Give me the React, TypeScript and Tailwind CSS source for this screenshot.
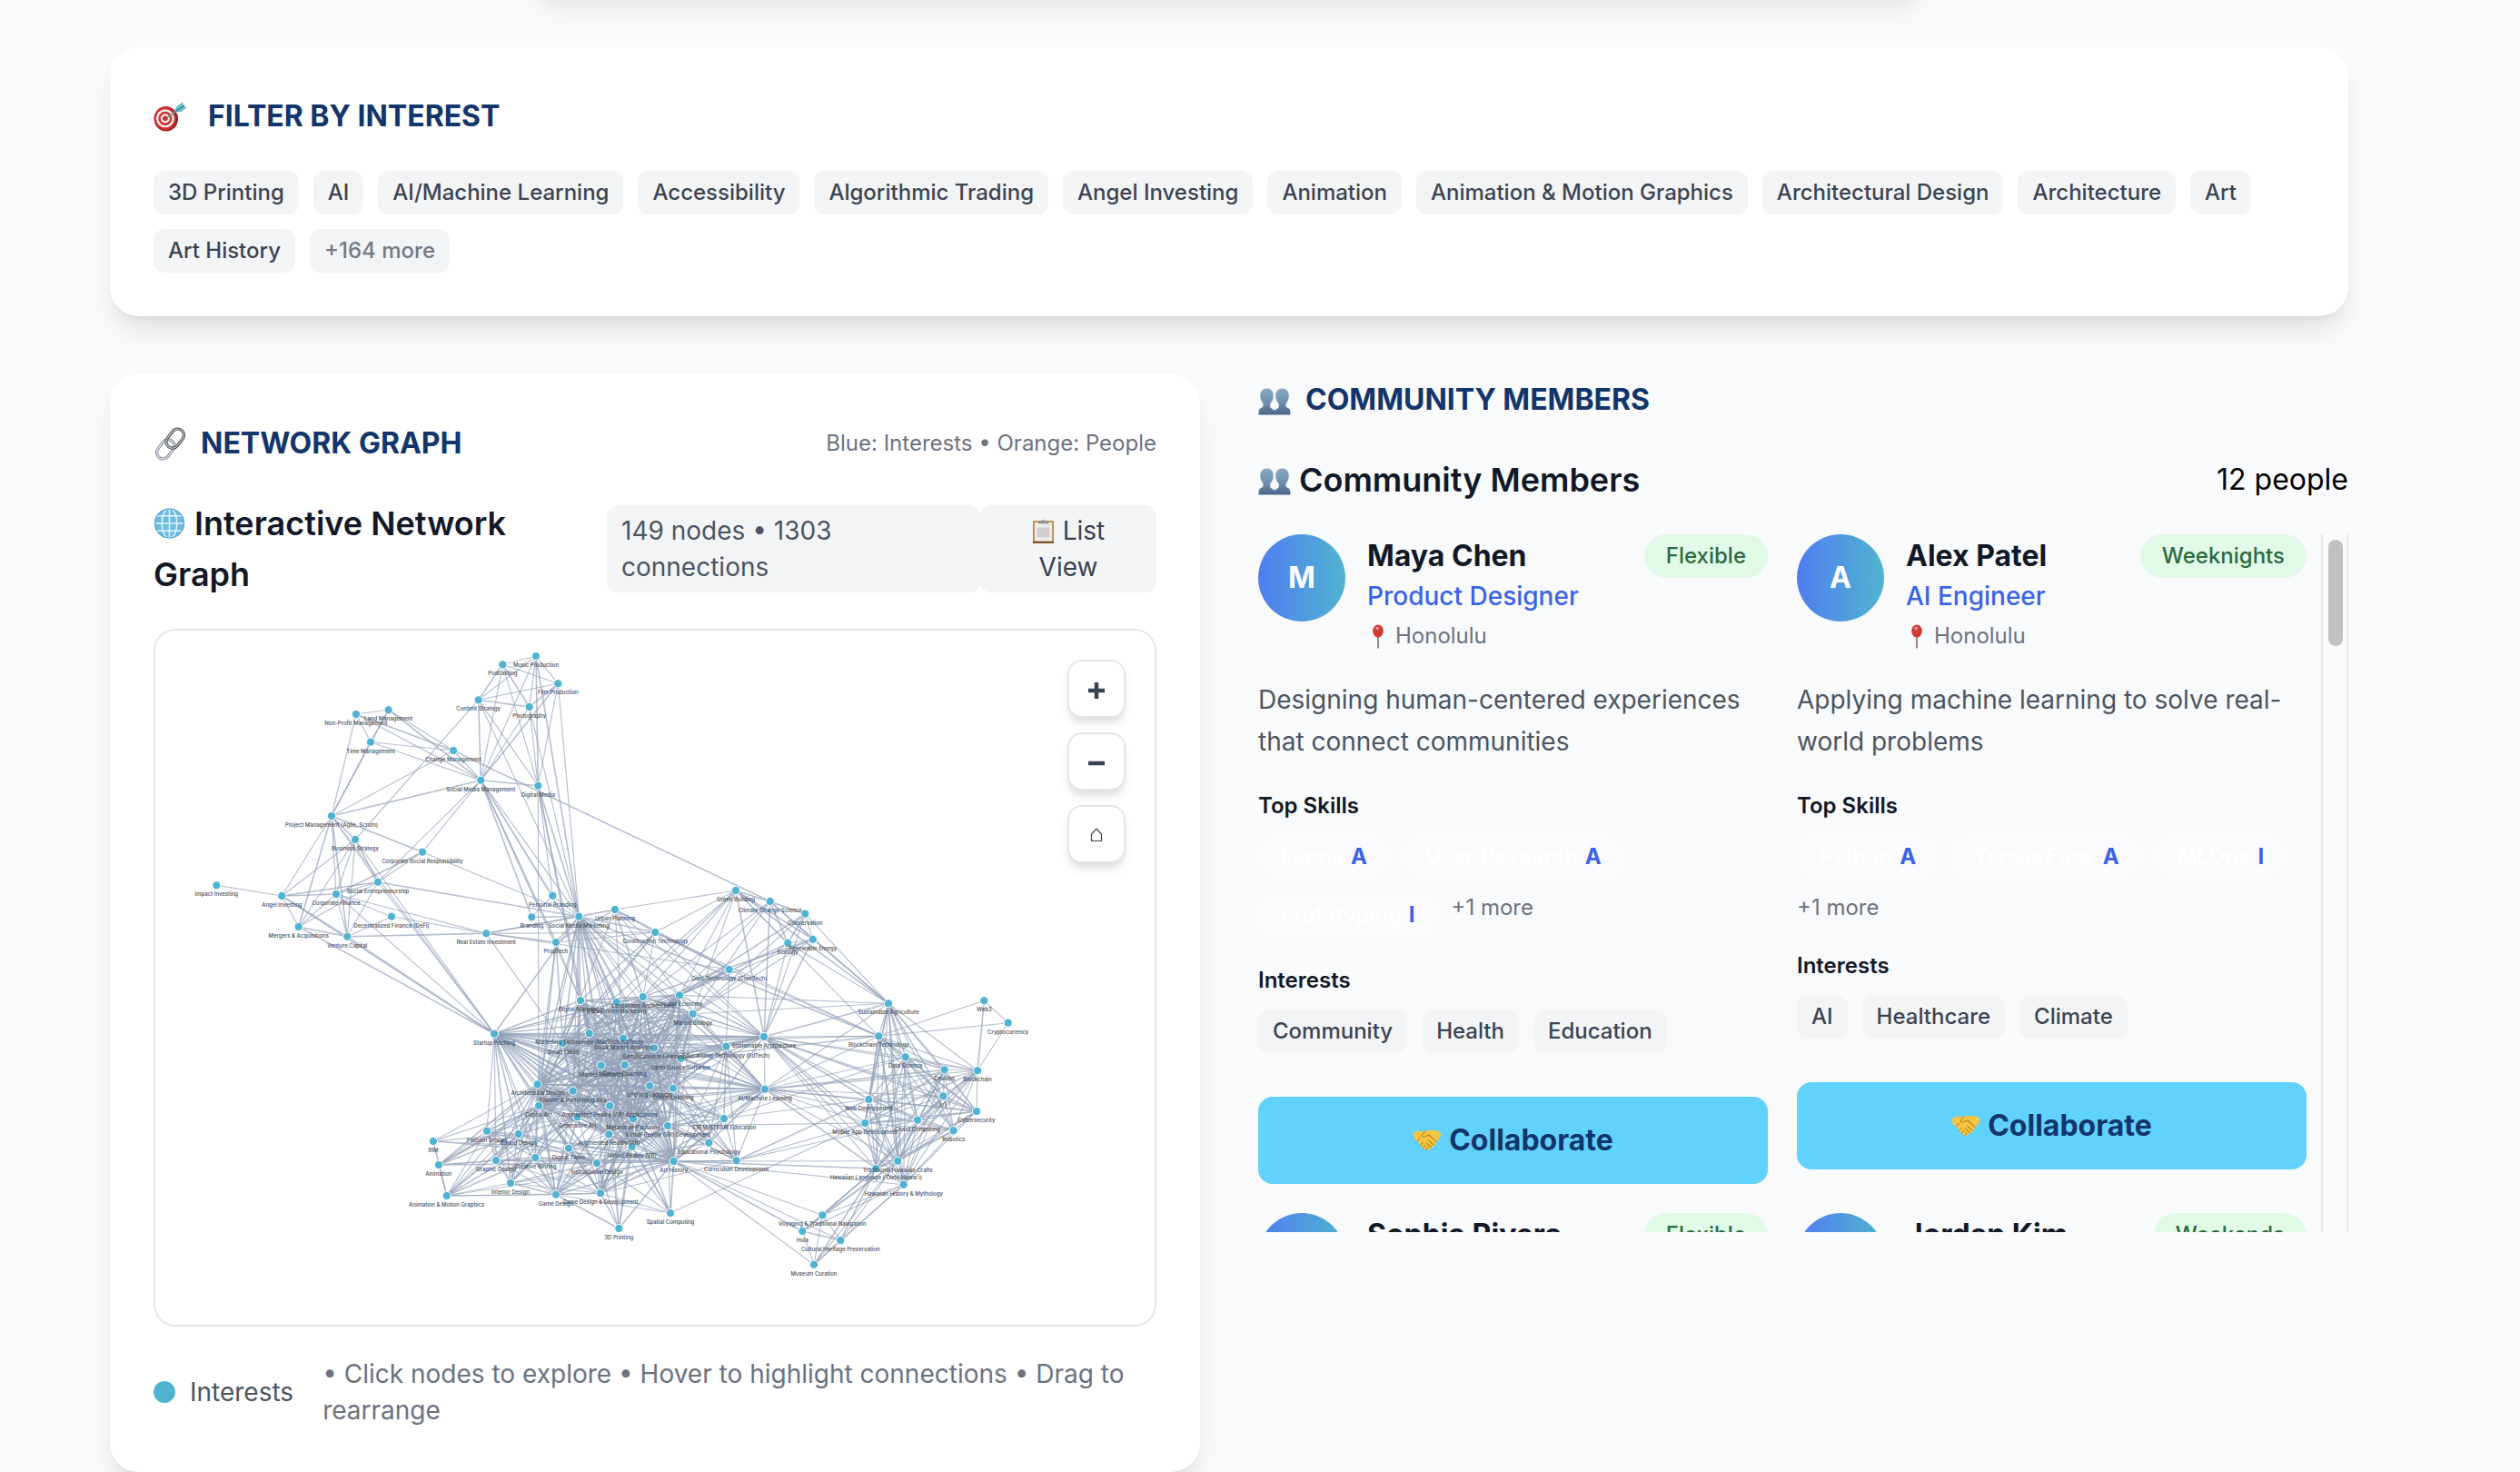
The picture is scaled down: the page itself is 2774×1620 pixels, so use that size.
import React from "react";

/* ---------- Icons ---------- */

function TargetIcon({ className }: { className?: string }) {
  return (
    <svg viewBox="0 0 40 36" className={className}>
      <ellipse cx="14.500" cy="21" rx="14" ry="14.500" fill="#8f1d1c" />
      <ellipse cx="13.500" cy="20.500" rx="13" ry="13.800" fill="#c9302b" />
      <circle cx="13.500" cy="20.500" r="10.600" fill="#f4efee" />
      <circle cx="13.500" cy="20.500" r="8" fill="#c9302b" />
      <circle cx="13.500" cy="20.500" r="5.400" fill="#f4efee" />
      <circle cx="13.500" cy="20.500" r="3" fill="#c9302b" />
      <path d="M15 20 L28 11" stroke="#6f8b93" strokeWidth="1.6" />
      <path d="M24 13 L26 7.500 L34 1 L34.500 6 L39 7.500 L32 13 Z" fill="#6fc0ca" />
      <path d="M25 13 L36 5" stroke="#2f7f90" strokeWidth="1.2" />
    </svg>
  );
}

function LinkIcon({ className }: { className?: string }) {
  return (
    <svg viewBox="0 0 40 40" className={className} fill="none">
      <g transform="rotate(-52 20 20)">
        <rect x="-1" y="12" width="25" height="15" rx="7.500" stroke="#7b828c" strokeWidth="3.400" />
        <rect x="-1" y="12" width="25" height="15" rx="7.500" stroke="#dde3ea" strokeWidth="1.500" />
        <rect x="16" y="13" width="25" height="15" rx="7.500" stroke="#4b4549" strokeWidth="3.400" />
        <rect x="16" y="13" width="25" height="15" rx="7.500" stroke="#c6cdd8" strokeWidth="1.300" />
      </g>
    </svg>
  );
}

function GlobeIcon({ className }: { className?: string }) {
  return (
    <svg viewBox="0 0 36 36" className={className} fill="none">
      <circle cx="18" cy="18" r="17" fill="#6dbbe0" />
      <g stroke="#e2f5fc" strokeWidth="1.600">
        <ellipse cx="18" cy="18" rx="8.500" ry="17" />
        <path d="M18 1v34M1 18h34M4 9.500h28M4 26.500h28" />
      </g>
      <circle cx="18" cy="18" r="16.600" stroke="#4a9bc4" strokeWidth="1" />
    </svg>
  );
}

function ClipboardIcon({ className }: { className?: string }) {
  return (
    <svg viewBox="0 0 26 30" className={className}>
      <rect x="1" y="3" width="24" height="26" rx="1.6" fill="#b98b4e" />
      <rect x="1" y="26.5" width="24" height="2.5" rx="1" fill="#7d5528" />
      <rect x="3" y="5" width="20" height="21.5" fill="#ecebe9" />
      <rect x="6" y="11" width="14" height="11" fill="#cfcecd" />
      <path d="M7 6.5V4h3.5a2.6 2.6 0 0 1 5 0H19v2.500z" fill="#8f969c" />
    </svg>
  );
}

function PeopleIcon({ className }: { className?: string }) {
  return (
    <svg viewBox="0 0 36 30" className={className}>
      <defs>
        <linearGradient id="bust" x1="0" y1="0" x2="0" y2="1">
          <stop offset="0" stopColor="#8aa9c6" />
          <stop offset="0.55" stopColor="#6e8eae" />
          <stop offset="1" stopColor="#48678a" />
        </linearGradient>
      </defs>
      <g fill="url(#bust)">
        <path d="M9.500 0.500c-4.500 0-7.300 3.200-7.300 8 0 4 1.600 6.600 3.300 8.500 .6 3-.4 4.600-2.700 5.300C1 23 .5 25 .5 29.500h18V25l-4.500-3c-1-.8-1.200-3-.6-5 1.800-2 3.400-4.500 3.400-8.500 0-4.800-2.800-8-7.300-8z" />
        <path d="M26.500 .5c4.500 0 7.300 3.200 7.300 8 0 4-1.600 6.600-3.300 8.500-.6 3 .4 4.600 2.700 5.300 1.800.7 2.300 2.700 2.300 7.200h-18V25l4.500-3c1-.8 1.200-3 .6-5-1.800-2-3.400-4.500-3.400-8.500 0-4.800 2.800-8 7.300-8z" />
      </g>
    </svg>
  );
}

function PinIcon({ className }: { className?: string }) {
  return (
    <svg viewBox="0 0 14 27" className={className}>
      <path d="M7 11v15.500" stroke="#8d7d78" strokeWidth="1.800" />
      <ellipse cx="7" cy="7.500" rx="5.800" ry="7" fill="#cf3a31" />
      <circle cx="6.200" cy="4.500" r="2" fill="#ee8b80" />
    </svg>
  );
}

function HandshakeIcon({ className }: { className?: string }) {
  return (
    <svg viewBox="0 0 32 24" className={className}>
      <path
        d="M0.500 4.500 5 1.200 11 2.600 14.500 1.300 20 1 27 1.200 31.500 4.500 29.500 10.500 26 13.500 24.500 17.500 20.500 20.500 16.500 23 12.500 21.500 8.500 17.500 5.500 12.500 2 11z"
        fill="#f5c644"
      />
      <path
        d="M14.500 1.500 10 6.500q1 3 5 .8l3-1.300 8 7.300M8.500 17.500l2.500-3M11.500 20.500l2.500-3.200M15 22.500l2-3M17.500 12l5.500 5M15.500 15l5 4.500M5.500 12.500l2.500-3"
        fill="none"
        stroke="#bd8420"
        strokeWidth="1.100"
        strokeLinecap="round"
      />
    </svg>
  );
}

/* ---------- Network graph ---------- */

type GraphNode = [number, number, string];

const nodes: Record<string, GraphNode> = {
  impact: [238.3, 974.3, "Impact Investing"],
  angel: [310.3, 986, "Angel Investing"],
  merger: [328.7, 1020, "Mergers & Acquisitions"],
  venture: [382.3, 1030.7, "Venture Capital"],
  corpfin: [370, 984, "Corporate Finance"],
  defi: [431, 1008.7, "Decentralized Finance (DeFi)"],
  socent: [416, 970.7, "Social Entrepreneurship"],
  biz: [391, 924, "Business Strategy"],
  proj: [365, 898, "Project Management (Agile, Scrum)"],
  csr: [465, 937.7, "Corporate Social Responsibility"],
  nonprofit: [392, 786, "Non-Profit Management"],
  land: [427.7, 781.3, "Land Management"],
  time: [408, 816.7, "Time Management"],
  change: [499, 826, "Change Management"],
  socmgmt: [529.3, 858.7, "Social Media Management"],
  digmedia: [592.3, 864.7, "Digital Media"],
  content: [526.7, 770.3, "Content Strategy"],
  podcast: [553.3, 731.3, "Podcasting"],
  music: [590, 722, "Music Production"],
  film: [614.3, 752.3, "Film Production"],
  photo: [582.7, 778, "Photography"],
  personal: [608.3, 985.7, "Personal Branding"],
  branding: [585.3, 1009.3, "Branding"],
  smm: [637.3, 1008.7, "Social Media Marketing"],
  urban: [677, 1001, "Urban Planning"],
  proptech: [612, 1037, "PropTech"],
  realestate: [535.3, 1027.3, "Real Estate Investment"],
  constr: [721.3, 1026, "Construction Technology"],
  civic: [802.7, 1067, "Civic Technology (CivicTech)"],
  digmkt: [639, 1101, "Digital Marketing"],
  ddm: [678.7, 1103, "Data-Driven Marketing"],
  landscape: [707.7, 1097, "Landscape Architecture"],
  circular: [748, 1095.3, "Circular Economy"],
  marine: [762.7, 1115.7, "Marine Biology"],
  startup: [544, 1137.7, "Startup Pitching"],
  smart: [619.7, 1148, "Smart Cities"],
  martech: [648.7, 1137.3, "Marketing Technology (MarTech/AdTech)"],
  stock: [686, 1142.7, "Stock Market Analysis"],
  gamif: [720, 1153.3, "Gamification in Learning"],
  oss: [749.3, 1165, "Open Source Software"],
  edtech: [799.3, 1151.7, "Educational Technology (EdTech)"],
  susarch: [841, 1141, "Sustainable Architecture"],
  market: [661.7, 1172.7, "Market Research"],
  career: [687.7, 1172, "Career Coaching"],
  arch: [591.7, 1193.3, "Architectural Design"],
  theater: [630.7, 1200.7, "Theater & Performing Arts"],
  lifelong: [715.3, 1195, "Lifelong Learning"],
  online: [741, 1197.7, "Online Learning"],
  aiml: [842, 1198.7, "AI/Machine Learning"],
  digart: [593, 1217, "Digital Art"],
  arapps: [671.3, 1217, "Augmented Reality (AR) Applications"],
  genart: [635.7, 1229.3, "Generative Art"],
  meta: [697, 1231.3, "Metaverse Platforms"],
  vrdev: [735, 1239, "Virtual Reality (VR) Development"],
  stem: [797, 1231, "STEM/STEAM Education"],
  ar: [670.3, 1248.3, "Augmented Reality (AR)"],
  vr: [695.7, 1262, "Virtual Reality (VR)"],
  edpsych: [780.3, 1257.7, "Educational Psychology"],
  fashion: [536, 1244.7, "Fashion Design"],
  sound: [570.7, 1248, "Sound Design"],
  twins: [626, 1263.7, "Digital Twins"],
  graphic: [546, 1277, "Graphic Design"],
  creative: [589.3, 1274, "Creative Writing"],
  instr: [657, 1280, "Instructional Design"],
  arthist: [741.7, 1278, "Art History"],
  curric: [810.7, 1277.3, "Curriculum Development"],
  interior: [562, 1302, "Interior Design"],
  gamedes: [612, 1314.7, "Game Design"],
  gamedev: [661, 1313.3, "Game Design & Development"],
  spatial: [738, 1335, "Spatial Computing"],
  print: [681.3, 1352, "3D Printing"],
  motion: [491.7, 1316, "Animation & Motion Graphics"],
  anim: [483, 1282, "Animation"],
  bim: [477, 1256, "BIM"],
  green: [810, 980, "Green Building"],
  climate: [847.7, 992, "Climate Change Science"],
  conserv: [886.3, 1005.7, "Conservation"],
  renew: [894.7, 1033.7, "Renewable Energy"],
  ecology: [867.3, 1038, "Ecology"],
  susag: [978, 1104.3, "Sustainable Agriculture"],
  blocktech: [967.3, 1140.3, "Blockchain Technology"],
  web3: [1083.3, 1101.3, "Web3"],
  crypto: [1109.7, 1125.7, "Cryptocurrency"],
  datasci: [996.7, 1163.3, "Data Science"],
  devops: [1039.7, 1177.3, "DevOps"],
  block: [1076, 1178.3, "Blockchain"],
  iot: [1038.3, 1206.3, "IoT"],
  cyber: [1075, 1223, "Cybersecurity"],
  webdev: [956.3, 1210, "Web Development"],
  mobile: [952.3, 1236, "Mobile App Development"],
  cloud: [1010, 1232.7, "Cloud Computing"],
  robotics: [1049.7, 1244.3, "Robotics"],
  crafts: [988.3, 1277.7, "Traditional Hawaiian Crafts"],
  olelo: [964.3, 1286, "Hawaiian Language (ʻŌlelo Hawaiʻi)"],
  myth: [994.7, 1303.7, "Hawaiian History & Mythology"],
  voyaging: [905.3, 1337.3, "Voyaging & Traditional Navigation"],
  hula: [883.3, 1355, "Hula"],
  cultural: [925.3, 1365, "Cultural Heritage Preservation"],
  museum: [896, 1391.7, "Museum Curation"],
};

// Each group is fully connected.
const groups = [
  "content podcast music film photo",
  "nonprofit land time",
  "angel merger venture corpfin biz proj",
  "socent corpfin csr",
  "defi corpfin venture",
  "realestate proptech urban constr smm",
  "personal branding smm",
  "climate conserv renew ecology green",
  "web3 crypto block",
  "startup smart martech stock gamif oss market career arch theater lifelong online digart arapps genart meta vrdev ar vr ddm digmkt landscape circular marine arthist",
  "interior graphic gamedes gamedev arthist instr creative arch digart",
  "susag blocktech datasci devops block iot cyber webdev mobile cloud robotics crafts olelo myth",
  "voyaging hula cultural museum",
];

// Hub node on the left, its neighbours on the right.
const spokes: [string, string][] = [
  ["socmgmt", "content podcast music film photo nonprofit land time change proj csr socent digmedia smm personal branding digmkt ddm proptech"],
  ["digmedia", "content podcast music film photo smm digart personal digmkt martech"],
  ["smm", "content music film photo socent csr digmkt ddm martech stock startup market career arch landscape circular smart gamif oss lifelong online digart meta theater susarch aiml arapps edtech blocktech genart"],
  ["proj", "nonprofit time land change csr socent startup"],
  ["change", "nonprofit land time climate"],
  ["impact", "angel"],
  ["content", "biz"],
  ["socent", "angel merger venture proj biz startup"],
  ["startup", "biz merger corpfin venture angel susarch aiml edtech fashion graphic interior gamedes gamedev sound creative instr curric edpsych twins stem"],
  ["realestate", "corpfin defi venture smart civic"],
  ["proptech", "smart arch digmkt digart"],
  ["urban", "green smart landscape susarch circular civic stock"],
  ["constr", "green smart arch susarch civic landscape blocktech digmkt"],
  ["green", "smart arch susarch landscape circular susag marine blocktech renew"],
  ["climate", "susarch circular marine susag landscape"],
  ["conserv", "susarch circular marine susag"],
  ["renew", "susarch circular marine landscape susag"],
  ["ecology", "susarch circular marine susag"],
  ["civic", "smart edtech blocktech circular"],
  ["susag", "circular marine susarch aiml"],
  ["susarch", "smart stock gamif oss market career arch lifelong online landscape circular marine theater edtech aiml ddm martech blocktech datasci cyber block iot webdev mobile olelo crafts myth cloud arthist"],
  ["aiml", "smart stock gamif oss market career arch lifelong online arapps meta vrdev edtech stem edpsych curric circular marine landscape ddm digart ar vr arthist blocktech datasci devops block iot cyber webdev mobile olelo crafts robotics"],
  ["edtech", "gamif oss lifelong online career market stem edpsych curric meta arthist"],
  ["stem", "online lifelong gamif datasci arthist vrdev edpsych arapps"],
  ["edpsych", "online lifelong gamif career vrdev instr"],
  ["curric", "online lifelong gamif career instr vrdev arthist stem webdev mobile cloud"],
  ["gamedev", "print spatial motion vr ar vrdev meta arapps genart stem curric edpsych lifelong gamif market career online twins"],
  ["gamedes", "print spatial vr ar vrdev meta arapps genart motion sound theater fashion twins"],
  ["arthist", "motion fashion sound twins crafts olelo myth voyaging hula museum cultural gamedes vrdev spatial bim"],
  ["arch", "fashion sound twins motion anim bim interior"],
  ["digart", "fashion sound twins motion anim graphic bim"],
  ["genart", "fashion sound interior graphic motion twins creative"],
  ["theater", "fashion sound interior creative motion graphic anim"],
  ["fashion", "sound interior graphic motion creative instr anim"],
  ["sound", "motion anim graphic interior instr bim"],
  ["print", "ar vr arapps instr arthist meta"],
  ["spatial", "ar vr arapps vrdev meta mobile instr"],
  ["motion", "bim anim interior creative"],
  ["anim", "graphic creative instr"],
  ["twins", "ar vr arapps meta bim instr"],
  ["vrdev", "mobile webdev instr"],
  ["circular", "interior gamedev instr arthist"],
  ["blocktech", "web3 crypto oss smart"],
  ["voyaging", "crafts olelo myth"],
  ["hula", "crafts olelo myth"],
  ["cultural", "crafts olelo myth"],
  ["museum", "crafts olelo myth"],
];

function buildEdges(): [string, string][] {
  const seen = new Set<string>();
  const list: [string, string][] = [];
  const add = (a: string, b: string) => {
    const key = a < b ? a + "|" + b : b + "|" + a;
    if (a !== b && !seen.has(key)) {
      seen.add(key);
      list.push([a, b]);
    }
  };
  groups.forEach((group) => {
    const ids = group.split(" ");
    ids.forEach((a, i) => ids.slice(i + 1).forEach((b) => add(a, b)));
  });
  spokes.forEach(([hub, targets]) => targets.split(" ").forEach((t) => add(hub, t)));
  return list;
}

const edges = buildEdges();

function NetworkCanvas() {
  return (
    <svg viewBox="171 694 1100 764" className="block h-full w-full">
      <g stroke="#94a0b8" strokeOpacity="0.68">
        {edges.map(([a, b], i) => (
          <line
            key={a + b}
            x1={nodes[a][0]}
            y1={nodes[a][1]}
            x2={nodes[b][0]}
            y2={nodes[b][1]}
            strokeWidth={i % 3 === 0 ? 1.6 : 1.15}
          />
        ))}
      </g>
      {Object.entries(nodes).map(([id, [x, y]]) => (
        <circle key={id} cx={x} cy={y} r="4.600" fill="#4fb3d1" stroke="#ffffff" strokeWidth="1" />
      ))}
      <g fill="#414b5a" fontSize="6" fontWeight="500" textAnchor="middle">
        {Object.entries(nodes).map(([id, [x, y, label]]) => (
          <text key={id} x={x} y={y + 12}>
            {label}
          </text>
        ))}
      </g>
    </svg>
  );
}

function ZoomButton({ children }: { children: React.ReactNode }) {
  return (
    <button className="flex h-16 w-16 items-center justify-center rounded-2xl border-2 border-[#e5e5eb] bg-white pt-1 text-[28px] leading-10 font-bold text-[#374151] shadow-[0_8px_12px_-2px_rgba(0,0,0,0.1),0_4px_8px_-4px_rgba(0,0,0,0.1)]">
      {children}
    </button>
  );
}

/* ---------- Members ---------- */

type Member = {
  name: string;
  role: string;
  bio: string;
  availability: string;
  skills: [string, string][];
  interests: string[];
};

const members: Member[] = [
  {
    name: "Maya Chen",
    role: "Product Designer",
    bio: "Designing human-centered experiences that connect communities",
    availability: "Flexible",
    skills: [["Figma", "A"], ["User Research", "A"], ["Prototyping", "I"]],
    interests: ["Community", "Health", "Education"],
  },
  {
    name: "Alex Patel",
    role: "AI Engineer",
    bio: "Applying machine learning to solve real-world problems",
    availability: "Weeknights",
    skills: [["Python", "A"], ["TensorFlow", "A"], ["MLOps", "I"]],
    interests: ["AI", "Healthcare", "Climate"],
  },
  {
    name: "Sophia Rivera",
    role: "",
    bio: "",
    availability: "Flexible",
    skills: [],
    interests: [],
  },
  {
    name: "Jordan Kim",
    role: "",
    bio: "",
    availability: "Weekends",
    skills: [],
    interests: [],
  },
];

function Chip({ children }: { children: React.ReactNode }) {
  return (
    <span className="rounded-xl bg-[#f3f4f6] px-4 py-2 text-2xl leading-8 font-medium whitespace-nowrap text-[#3b4454]">
      {children}
    </span>
  );
}

function MemberCard({ member }: { member: Member }) {
  return (
    <article>
      <div className="flex items-start">
        <div className="flex h-24 w-24 shrink-0 items-center justify-center rounded-full bg-linear-to-r/srgb from-[#4f7df0] to-[#50b4d0] text-[32px] leading-none font-bold text-white">
          {member.name[0]}
        </div>
        <div className="ml-6 flex-1">
          <h4 className="text-[32px] leading-[48px] font-bold whitespace-nowrap text-[#111827]">{member.name}</h4>
          {member.role && (
            <>
              <p className="text-[28px] leading-10 font-medium text-[#3b63e6]">{member.role}</p>
              <p className="mt-2 flex items-center text-2xl leading-8 text-[#6b7280]">
                <PinIcon className="mr-[12px] ml-[5px] h-[27px] w-[14px]" />
                Honolulu
              </p>
            </>
          )}
        </div>
        <span className="rounded-full bg-[#e1fae8] px-6 py-2 text-2xl leading-8 font-medium text-[#2d6a3e]">
          {member.availability}
        </span>
      </div>
      {member.bio && (
        <>
          <p className="mt-8 text-[28px] leading-[45.5px] text-[#4b5563]">{member.bio}</p>
          <h5 className="mt-8 text-2xl leading-8 font-semibold text-[#111827]">Top Skills</h5>
          <div className="mt-4 flex flex-wrap items-start gap-4">
            {member.skills.map(([skill, level]) => (
              <span
                key={skill}
                className="flex gap-2 rounded-full bg-white/30 px-6 py-2 text-2xl leading-8 font-medium text-white"
              >
                {skill}
                <b className="font-bold text-[#3b63e6]">{level}</b>
              </span>
            ))}
            <span className="text-2xl leading-8 text-[#6b7280]">+1 more</span>
          </div>
          <h5 className="mt-8 text-2xl leading-8 font-semibold text-[#111827]">Interests</h5>
          <div className="mt-4 flex flex-wrap gap-4">
            {member.interests.map((interest) => (
              <Chip key={interest}>{interest}</Chip>
            ))}
          </div>
          <button className="mt-12 flex h-24 w-full items-center justify-center gap-2 rounded-2xl bg-[#61d1fd] text-[32px] font-bold text-[#12356b]">
            <HandshakeIcon className="h-6 w-8" />
            Collaborate
          </button>
        </>
      )}
    </article>
  );
}

/* ---------- Page ---------- */

const filters = [
  "3D Printing",
  "AI",
  "AI/Machine Learning",
  "Accessibility",
  "Algorithmic Trading",
  "Angel Investing",
  "Animation",
  "Animation & Motion Graphics",
  "Architectural Design",
  "Architecture",
  "Art",
  "Art History",
];

export default function App() {
  return (
    <div className="h-[1620px] w-[2774px] overflow-hidden bg-[#f9fafc] font-['Inter',sans-serif]">
      <div className="-mt-16 ml-[585px] h-[56px] w-[1536px] rounded-[32px] bg-white shadow-[0_20px_30px_-6px_rgba(0,0,0,0.1),0_8px_12px_-8px_rgba(0,0,0,0.1)]" />

      <main className="mt-[60px] ml-[121px] w-[2464px]">
        <section className="rounded-[32px] bg-white p-12 shadow-[0_20px_30px_-6px_rgba(0,0,0,0.1),0_8px_12px_-8px_rgba(0,0,0,0.1)]">
          <h2 className="mb-8 flex items-center text-[32px] leading-[56px] font-bold text-[#12356b]">
            <TargetIcon className="mr-[22px] h-[34px] w-[38px]" />
            FILTER BY INTEREST
          </h2>
          <div className="flex flex-wrap gap-4">
            {filters.map((filter) => (
              <Chip key={filter}>{filter}</Chip>
            ))}
            <span className="rounded-xl bg-[#f3f4f6] px-4 py-2 text-2xl leading-8 font-medium text-[#737985]">
              +164 more
            </span>
          </div>
        </section>

        <div className="mt-16 grid grid-cols-2 items-start gap-16">
          <section className="rounded-[32px] bg-white p-12 shadow-[0_20px_30px_-6px_rgba(0,0,0,0.1),0_8px_12px_-8px_rgba(0,0,0,0.1)]">
            <div className="mb-8 flex h-14 items-center justify-between">
              <h2 className="flex items-center text-[32px] leading-[56px] font-bold text-[#12356b]">
                <LinkIcon className="mr-[15px] h-[37px] w-[37px]" />
                NETWORK GRAPH
              </h2>
              <span className="text-2xl leading-8 text-[#6b7280]">Blue: Interests • Orange: People</span>
            </div>

            <div className="mb-8 flex items-center">
              <h3 className="w-[499px] shrink-0 text-[36px] leading-[56px] font-semibold text-[#111827]">
                <GlobeIcon className="mr-[10px] -mt-[6px] inline-block h-[36px] w-[35px]" />
                Interactive Network
                <br />
                Graph
              </h3>
              <div className="w-[411px] rounded-xl bg-[#f3f4f6] px-4 py-2 text-[28px] leading-10 text-[#4b5563]">
                149 nodes • 1303
                <br />
                connections
              </div>
              <button className="w-[194px] rounded-xl bg-[#f3f4f6] py-2 text-center text-[28px] leading-10 text-[#374151]">
                <ClipboardIcon className="mr-[9px] -mt-[3px] inline-block h-[29px] w-[25px]" />
                List
                <br />
                View
              </button>
            </div>

            <div className="relative h-[768px] overflow-hidden rounded-3xl border-2 border-[#e5e5eb] bg-white">
              <NetworkCanvas />
              <div className="absolute top-8 right-8 flex flex-col gap-4">
                <ZoomButton>
                  <svg viewBox="0 0 18 18" className="h-[18px] w-[18px]" stroke="#374151" strokeWidth="4.500">
                    <path d="M9 0v18M0 9h18" />
                  </svg>
                </ZoomButton>
                <ZoomButton>
                  <svg viewBox="0 0 18 18" className="h-[18px] w-[18px]" stroke="#374151" strokeWidth="4.500">
                    <path d="M0 9h18" />
                  </svg>
                </ZoomButton>
                <ZoomButton>
                  <svg viewBox="0 0 14 16" className="-mt-0.5 h-4 w-[14px]" fill="none" stroke="#374151" strokeWidth="1.200">
                    <path d="M1.500 14.500V7L7 1.200 12.500 7v7.500z" />
                  </svg>
                </ZoomButton>
              </div>
            </div>

            <div className="mt-8 flex items-center text-[28px] leading-10">
              <span className="mr-4 h-6 w-6 shrink-0 rounded-full bg-[#50b3d1]" />
              <span className="mr-8 text-[#4b5563]">Interests</span>
              <span className="text-[#6b7280]">
                • Click nodes to explore • Hover to highlight connections • Drag to rearrange
              </span>
            </div>
          </section>

          <section>
            <h2 className="mb-8 flex items-center text-[32px] leading-[56px] font-bold text-[#12356b]">
              <PeopleIcon className="mt-[4px] mr-[16px] h-[30px] w-[36px]" />
              COMMUNITY MEMBERS
            </h2>
            <div className="mb-8 flex items-center justify-between">
              <h3 className="flex items-center text-[36px] leading-[56px] font-semibold text-[#111827]">
                <PeopleIcon className="mt-[4px] mr-[9px] h-[30px] w-[36px]" />
                Community Members
              </h3>
              <span className="text-[32px] leading-[48px] text-black">12 people</span>
            </div>
            <div className="flex h-[768px] justify-between overflow-hidden">
              <div className="grid w-[1154px] grid-cols-2 content-start items-start gap-8">
                {members.map((member) => (
                  <MemberCard key={member.name} member={member} />
                ))}
              </div>
              <div className="h-full w-[30px] border-x-2 border-[#e8e8e8] bg-[#fafafa] px-[6px] pt-[6px]">
                <div className="h-[117px] w-4 rounded-full bg-[#c1c1c1]" />
              </div>
            </div>
          </section>
        </div>
      </main>
    </div>
  );
}
